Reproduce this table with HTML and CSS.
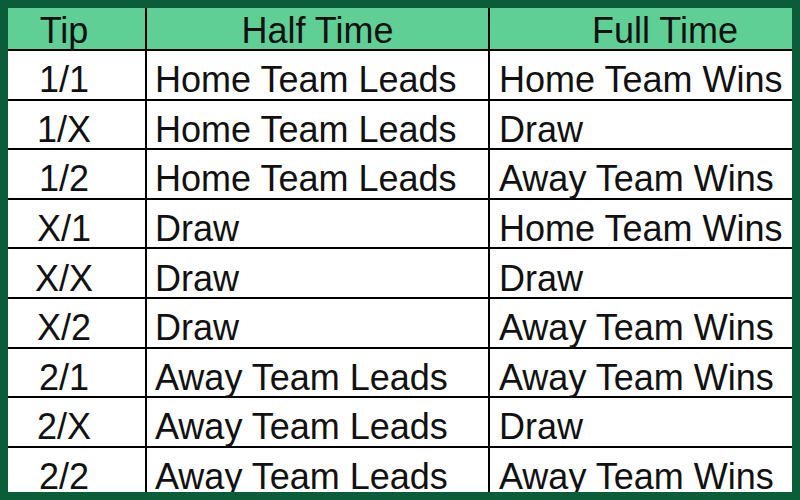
FILE: index.html
```html
<!DOCTYPE html>
<html>
<head>
<meta charset="utf-8">
<link rel="stylesheet" href="styles.css">
</head>
<body>
<div class="frame">
  <div class="table">
    <div class="cell head tip">Tip</div>
    <div class="cell head mid">Half Time</div>
    <div class="cell head last">Full Time</div>

    <div class="cell tip">1/1</div>
    <div class="cell half">Home Team Leads</div>
    <div class="cell full">Home Team Wins</div>

    <div class="cell tip">1/X</div>
    <div class="cell half">Home Team Leads</div>
    <div class="cell full">Draw</div>

    <div class="cell tip">1/2</div>
    <div class="cell half">Home Team Leads</div>
    <div class="cell full">Away Team Wins</div>

    <div class="cell tip">X/1</div>
    <div class="cell half">Draw</div>
    <div class="cell full">Home Team Wins</div>

    <div class="cell tip">X/X</div>
    <div class="cell half">Draw</div>
    <div class="cell full">Draw</div>

    <div class="cell tip">X/2</div>
    <div class="cell half">Draw</div>
    <div class="cell full">Away Team Wins</div>

    <div class="cell tip">2/1</div>
    <div class="cell half">Away Team Leads</div>
    <div class="cell full">Away Team Wins</div>

    <div class="cell tip">2/X</div>
    <div class="cell half">Away Team Leads</div>
    <div class="cell full">Draw</div>

    <div class="cell tip">2/2</div>
    <div class="cell half">Away Team Leads</div>
    <div class="cell full">Away Team Wins</div>
  </div>
</div>
</body>
</html>
```

FILE: styles.css
```css
html, body {
  margin: 0;
  padding: 0;
  background: #0b5c38;
}

.frame {
  width: 800px;
  height: 500px;
  box-sizing: border-box;
  padding: 8px;
  background: #0b5c38;
}

.table {
  width: 784px;
  height: 484px;
  overflow: hidden;
  background: #ffffff;
  display: grid;
  grid-template-columns: 139px 343px 350px;
  grid-template-rows: 43px repeat(9, 49.6px);
  font-family: "Liberation Sans", Arial, sans-serif;
  font-size: 36px;
  color: #111111;
}

.cell {
  box-sizing: border-box;
  border-right: 2px solid #000;
  border-bottom: 2px solid #000;
  display: flex;
  align-items: center;
  white-space: nowrap;
  padding-top: 11px;
}

.head {
  background: #5fcf95;
  justify-content: center;
  padding-top: 4px;
}

.tip {
  justify-content: center;
  padding-right: 25px;
}

.half {
  padding-left: 8px;
}

.full {
  padding-left: 9px;
  border-right: none;
}

.last {
  border-right: none;
}
```
